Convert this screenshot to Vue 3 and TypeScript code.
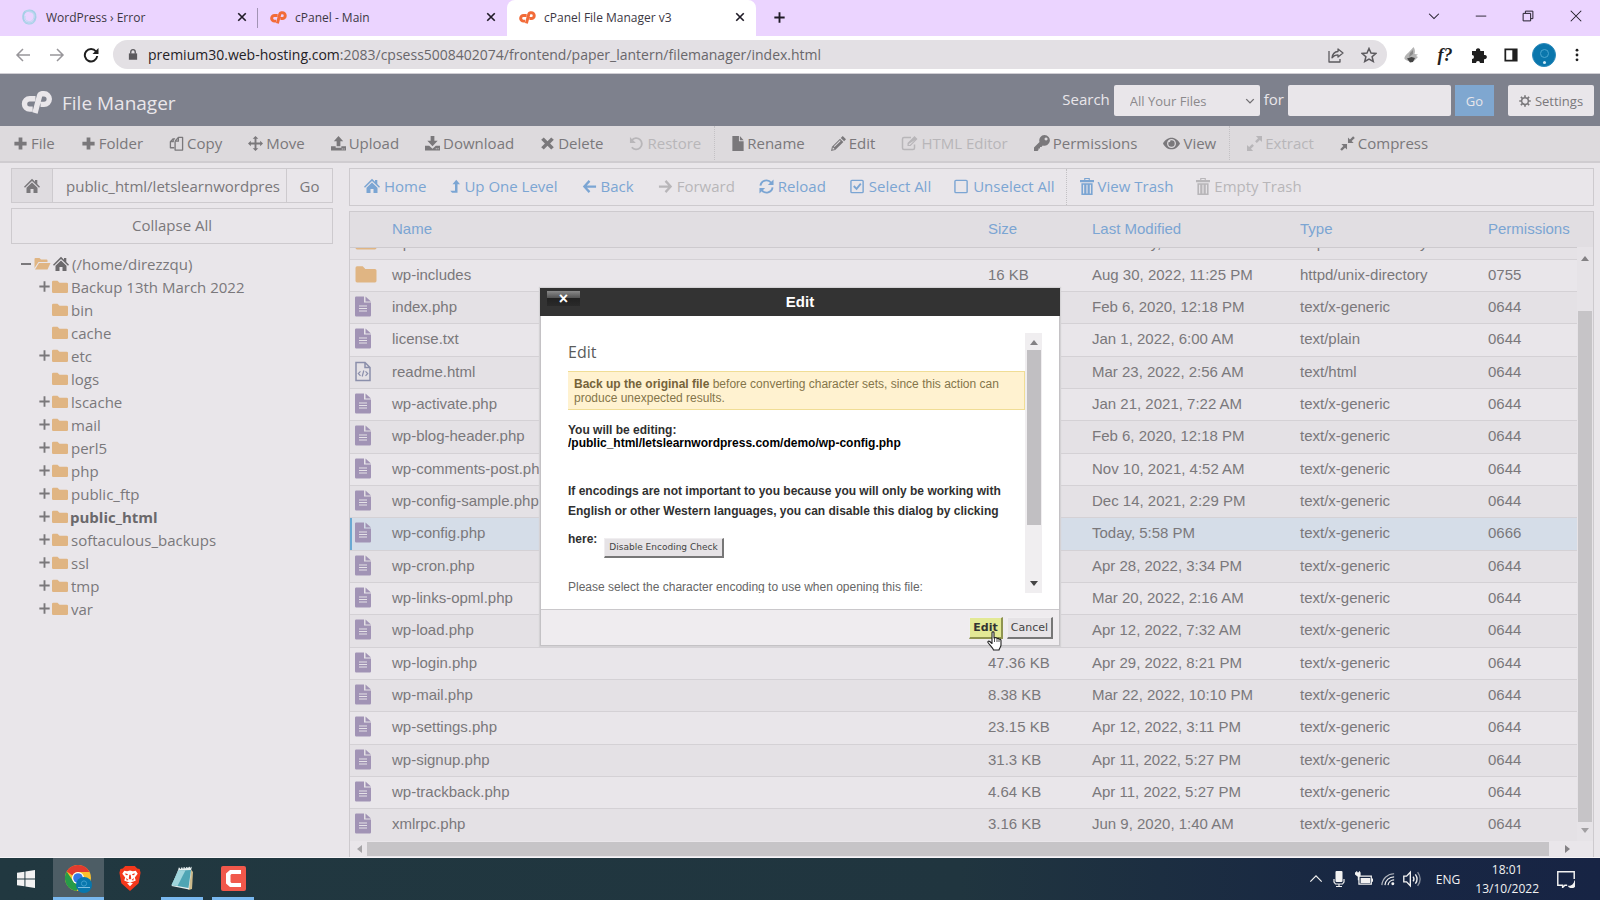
<script setup lang="ts">
import { h, ref } from 'vue'

const icons: Record<string, string> = {
  plus: '<path d="M6 1.500h4V6h4.500v4H10v4.500H6V10H1.500V6H6z"/>',
  copy: '<path fill="none" stroke="currentColor" stroke-width="1.400" stroke-linejoin="round" d="M5.500 12.500H1.500V6l3-3h2M4.500 3v3h-3M6.500 5.500l3.500-4h4.500v10.500M10 1.500v4H6.500M6.500 5.500v9.500h8v-4"/>',
  move: '<path d="M8 0l3 3H9v4h4V5l3 3-3 3V9H9v4h2l-3 3-3-3h2V9H3v2L0 8l3-3v2h4V3H5z"/>',
  upload: '<path d="M8 0l5 5.500h-3V11H6V5.500H3z"/><path d="M0 11h5v1.500h6V11h5v4.500H0zM11.500 13.300v1h1v-1zm2 0v1h1v-1z" fill-rule="evenodd"/>',
  download: '<path d="M6 0h4v5h3.500L8 10.800 2.500 5H6z"/><path d="M0 10.500h4.500L8 13.500l3.500-3H16v5H0zM11.500 13v1h1v-1zm2 0v1h1v-1z" fill-rule="evenodd"/>',
  times: '<path d="M4 1.500l4 4 4-4L14.800 4l-4 4 4 4-2.800 2.500-4-4-4 4L1.200 12l4-4-4-4z"/>',
  undo: '<path fill="none" stroke="currentColor" stroke-width="2" d="M3 4.500a6 6 0 1 1 0 7.500"/><path d="M1 1v6.500h6.300z"/>',
  file: '<path d="M2 0h7v5.500h5V16H2z"/><path d="M10 0l4 4.500h-4z"/>',
  pencil: '<path fill-rule="evenodd" d="M12.500 0L16 3.500 14 5.600 10.400 2zM9.600 2.800l3.600 3.600L4.500 15 0 16l1-4.600zM9.500 4.600L3 11l.7.700L10.300 5.300zM2 12l-.5 2.500L4 14z"/>',
  edit: '<path fill="none" stroke="currentColor" stroke-width="1.500" d="M9.500 2.500h-7a1.500 1.500 0 0 0-1.500 1.500v9a1.500 1.500 0 0 0 1.500 1.500h9a1.500 1.500 0 0 0 1.500-1.500V9.500"/><path fill-rule="evenodd" d="M13 1l3 3-7 7H6V8zM8 8.500L7.300 9v1h1L13.500 5z"/>',
  key: '<path fill-rule="evenodd" d="M10.500 0a5.400 5.400 0 1 1-1.800 10.500L7.500 12H6v1.500H4.500V15l-1 1H0v-3.500l5.500-5.500A5.400 5.400 0 0 1 10.500 0zM12 2.500a1.500 1.500 0 1 0 .1 0z"/>',
  eye: '<path fill-rule="evenodd" d="M8 2.500c3.500 0 6.500 2.300 8 5.500-1.500 3.200-4.500 5.500-8 5.500S1.500 11.200 0 8c1.500-3.200 4.500-5.500 8-5.500zM8 3.800A4.200 4.200 0 1 0 8 12.200 4.200 4.200 0 0 0 8 3.800zM8 5a3 3 0 1 1-3 3c0-.5.1-.9.300-1.300A1.500 1.500 0 0 0 7 5.200c.3-.1.600-.2 1-.2z"/>',
  expand: '<path d="M9.500 0H16v6.500l-2.300-2.300-3.200 3.200-1.900-1.900 3.200-3.200zM6.500 16H0V9.500l2.300 2.300 3.200-3.200 1.900 1.900-3.200 3.200z"/>',
  compress: '<path d="M8.500 7.500V1.500L10.600 3.600 14 .2 15.800 2l-3.400 3.400 2.100 2.100zM7.500 8.500v6l-2.100-2.100L2 15.800.2 14l3.400-3.400-2.100-2.100z"/>',
  home: '<path d="M8 .8l3 3V2h2.300v4L16 8.700l-1 1L8 3 1 9.700l-1-1z"/><path d="M8 4.500l5.500 5.200V15h-4v-4h-3v4h-4V9.700z"/>',
  levelup: '<path d="M9.500 0L14 5.300h-3V15.500H4.500L2.300 13h5.700V5.300H5z"/>',
  back: '<path fill="none" stroke="currentColor" stroke-width="2.400" d="M8 2L2.500 8 8 14M2.500 8H15"/>',
  forward: '<path fill="none" stroke="currentColor" stroke-width="2.400" d="M8 2l5.500 6L8 14M13.500 8H1"/>',
  reload: '<path fill="none" stroke="currentColor" stroke-width="2" d="M1.500 7A6.500 6.500 0 0 1 13 4M14.500 9A6.500 6.500 0 0 1 3 12"/><path d="M15.500 .5v6h-6zM.5 15.500v-6h6z"/>',
  check: '<rect x="1" y="1.500" width="13" height="13" rx="1" fill="none" stroke="currentColor" stroke-width="1.500"/><path fill="none" stroke="currentColor" stroke-width="2" d="M4 7.500l3 3L11.500 5"/>',
  square: '<rect x="1" y="1.500" width="13" height="13" rx="1" fill="none" stroke="currentColor" stroke-width="1.500"/>',
  trash: '<path fill-rule="evenodd" d="M4.500 0h6v2H15v2.500H0V2h4.500zm1.200 1v1h3.600V1zM1.500 5.500h12V18h-12zM3.300 7v9.500h1.200V7zm3.600 0v9.500h1.200V7zM10.500 7v9.500h1.200V7z"/>',
  cog: '<path fill="none" stroke="currentColor" stroke-width="2" d="M8 3.500a4.500 4.500 0 1 1 0 9 4.500 4.500 0 0 1 0-9z"/><path fill="none" stroke="currentColor" stroke-width="2.200" d="M8 .3v3M8 12.700v3M.3 8h3M12.700 8h3M2.500 2.500l2 2M11.500 11.500l2 2M13.500 2.500l-2 2M4.500 11.500l-2 2"/>',
  folder: '<path d="M0 3a1.200 1.200 0 0 1 1.200-1.200H5.500L7.500 3.800h7.300A1.200 1.200 0 0 1 16 5v7.800a1.200 1.200 0 0 1-1.200 1.200H1.200A1.200 1.200 0 0 1 0 12.800z"/>',
  folderopen: '<path d="M0 3a1 1 0 0 1 1-1h4l1.500 1.500H12a1 1 0 0 1 1 1V6H4L0 12z"/><path d="M4.500 7H16l-3 6.500H.5z"/>',
  plain: '<path d="M0 1.200A1.200 1.200 0 0 1 1.200 0H9v6h7v12.800A1.200 1.200 0 0 1 14.800 20H1.200A1.200 1.200 0 0 1 0 18.800z"/><path d="M10.500 0L16 5h-5.500z"/><path stroke="#e5e2e7" stroke-width="1" d="M4 9.500h8M4 12h8M4 14.500h8"/>',
  html: '<path fill="none" stroke="currentColor" stroke-width="1.500" d="M1 1h9l5 5v13H1zM10 1v5h5"/><path fill="none" stroke="currentColor" stroke-width="1.200" d="M5.500 9.800L3.300 12l2.200 2.300M10.500 9.800l2.200 2.200-2.200 2.300M8.800 9l-1.600 6"/>',
  cp: '<path fill="none" stroke="currentColor" stroke-width="5.400" d="M14 7.700H8.200a5 5 0 0 0 0 10.400h3"/><path fill="none" stroke="currentColor" stroke-width="5.400" stroke-linejoin="round" d="M13.500 22L18 5a3 3 0 0 1 2.600-2.200h1.900a5.300 5.300 0 0 1 0 10.600h-3.500"/>',
  close: '<path fill="none" stroke="currentColor" stroke-width="2.200" d="M3 3l10 10M13 3L3 13"/>',
  thinclose: '<path fill="none" stroke="currentColor" stroke-width="1.200" d="M2 2l12 12M14 2L2 14"/>',
  chevron: '<path fill="none" stroke="currentColor" stroke-width="1.400" d="M1.500 5L8 11.500 14.500 5"/>',
  caretdown: '<path fill="none" stroke="currentColor" stroke-width="2.200" d="M2 5l6 6 6-6"/>',
  minimize: '<path d="M1 7.500h14v1.200H1z"/>',
  restore: '<path fill="none" stroke="currentColor" stroke-width="1.300" d="M1.500 4.500h10v10h-10zM4.500 4V1.500h10v10H12"/>',
  arrowleft: '<path fill="none" stroke="currentColor" stroke-width="1.500" d="M8 2L2 8l6 6M2 8h13"/>',
  arrowright: '<path fill="none" stroke="currentColor" stroke-width="1.500" d="M8 2l6 6-6 6M14 8H1"/>',
  refresh: '<path fill="none" stroke="currentColor" stroke-width="2" d="M13 4.500A6.200 6.200 0 1 0 14.200 9"/><path d="M15.500 1v6h-6z"/>',
  lock: '<path d="M2.500 6.500h11V15h-11z"/><path fill="none" stroke="currentColor" stroke-width="1.800" d="M5 7V4.500a3 3 0 0 1 6 0V7"/>',
  share: '<path fill="none" stroke="currentColor" stroke-width="1.300" stroke-linejoin="round" d="M1 4v11h11v-3M10 2l5 4-5 4V7.800c-3 0-4.500 1-6 3 .5-4 2.500-6 6-6.300z"/>',
  star: '<path fill="none" stroke="currentColor" stroke-width="1.500" d="M8 1.500l2 4.600 4.800.4-3.700 3.200 1.200 4.800L8 12l-4.300 2.500 1.200-4.800L1.200 6.500 6 6.100z"/>',
  puzzle: '<path d="M1 4h4a2.200 2.200 0 1 1 4.200 0H13v4a2.200 2.200 0 1 1 0 4.200V16H9a2 2 0 1 0-4 0H1v-4a2 2 0 1 0 0-4z"/>',
  panel: '<path fill-rule="evenodd" d="M.5.500h15v15H.500zM2.500 2.500v11h7v-11z"/>',
  dots: '<circle cx="8" cy="2.500" r="1.600"/><circle cx="8" cy="8" r="1.600"/><circle cx="8" cy="13.500" r="1.600"/>',
  bird: '<path fill="#b4b4b4" d="M1.500 12C1 8 6 6 10.500 0c2 3 1.500 5 1 7l3.500.5-2 1.500 2 1-3.500 3.500c-4 1.500-7 1-10-1.500z"/><path fill="#444" d="M4 11.500l4.500-1.500 3.500 1-2 4-3 .5z"/><path fill="#8a8a8a" d="M7 6l3-3v4l-4 3z"/>',
  swirl: '<path fill="none" stroke="#a5cfe6" stroke-width="2" d="M8 1.500c4 0 6.500 3 6 7s-3.500 6.500-7 6S1.300 11 1.700 7 5 1.500 8 1.500z"/><path fill="none" stroke="#bcd9f0" stroke-width="1" d="M8 3c3 0 5 2 4.500 5S10 13 7 12.500 3 10 3.500 7M4 2.500c4-2 9 1 9.500 4M3 12c2 3 7 3 10 0"/>',
  windows: '<path d="M0 2.500l6.600-1v6H0zM7.500 1.400L16 0v7.500H7.500zM0 8.500h6.600v6L0 13.500zM7.500 8.500H16V16l-8.500-1.400z"/>',
  chrome: '<circle cx="13" cy="13" r="13" fill="#fbc02d"/><path fill="#e33b2e" d="M1.700 6.500A13 13 0 0 1 24.500 7H13a6 6 0 0 0-5.500 3.500z"/><path fill="#279b48" d="M1.700 6.500L8 16a6 6 0 0 0 7 2.700L11.500 26A13 13 0 0 1 1.700 6.500z"/><circle cx="13" cy="13" r="6" fill="#fff"/><circle cx="13" cy="13" r="4.800" fill="#3478e5"/><circle cx="19" cy="20" r="8" fill="#0877ad"/><circle cx="19" cy="18.500" r="2.600" fill="none" stroke="#3f9fce"/><path stroke="#7fc0e0" d="M13 22.500h12"/>',
  brave: '<path fill="#f4381c" d="M6 0h10l2.500 2.500L21 3l1 4-2 11-9 8-9-8L0 7l1-4 2.500-.5z"/><path fill="#fff" d="M5 5l3 .5 3-.8 3 .8 3-.5 2 3-3 4 1 3-3 1.500-3 .5-3-.500-3-1.500 1-3-3-4zM8 18l3-1 3 1-3 3z"/><path fill="#f4381c" d="M6 7.500l3 1-1 1.200-1.500-.4zM16 7.500l-3 1 1 1.200 1.500-.4zM10.300 9h1.400l.6 4-1.300 1-1.300-1zM7 12.500l2.500 2-2 .5zM15 12.500l-2.500 2 2 .5z"/>',
  notepad: '<path fill="#cdbb8c" d="M20 3l2.500 3-1 17-3.500 1z"/><path fill="#e8f0f0" d="M8 3l13-1.500L18.500 23.500 1 20z"/><path fill="#4fa5b4" d="M8 4.500l12.500-.5L18 22 1 19z"/><path fill="#9fd5dc" d="M8 4.500l7-.3L7 20l-6-1z"/><path stroke="#dfe8ea" stroke-width="1.500" stroke-dasharray="1.500 1" d="M8 2.500l13-1"/>',
  camtasia: '<rect width="25" height="25" rx="2" fill="#f1584b"/><path fill="#fff" d="M9 4h11v4h-9.500L9.500 9v7l1 1H20v4H9l-4-3.500v-10z"/>',
  mic: '<rect x="4.500" y="0" width="7" height="11" rx="1"/><path fill="none" stroke="currentColor" stroke-width="1.200" d="M3 8v3l1.500 2h7L13 11V8M8 13v2.500M5 15.500h6"/>',
  battery: '<path fill="none" stroke="currentColor" stroke-width="1.100" d="M3.500 5.500h11v7h-11z"/><path d="M5 7h8.500v4.500H5zM15 7.500h1.200v3H15zM0 2h1V1h1v1h1.500V1h1v1H5v3L3.500 6v3h-1V6L0 4z"/>',
  wifi: '<g fill="none" stroke="currentColor" stroke-width="1.300"><path d="M1 15A14 14 0 0 1 15 2" opacity=".7"/><path d="M4.500 15A10.500 10.500 0 0 1 15 5.500M8 15A7 7 0 0 1 15 9"/></g><circle cx="13.500" cy="13.500" r="1.700"/>',
  volume: '<path fill="none" stroke="currentColor" stroke-width="1.200" d="M.7 5.500h2.500L6.500 2v12L3.200 10.500H.7zM9 5.800q1.500 2.200 0 4.400"/><path fill="none" stroke="currentColor" stroke-width="1.200" d="M11 3.800q3 4.200 0 8.400"/><path opacity=".5" fill="none" stroke="currentColor" stroke-width="1.200" d="M13 1.800q4.500 6.200 0 12.400"/>',
  notice: '<path fill="none" stroke="currentColor" stroke-width="1.300" d="M9 13.500H7L5 15.500V13.500H.700V1.500h14.600V8"/><path d="M15.500 9a4 4 0 1 1-6 5c3 .5 5.500-1.500 6-5z"/>',
  hand: '<path fill="#fff" stroke="#222" stroke-width="1.100" stroke-linejoin="round" d="M5 1.500C5 .5 7 .5 7 1.500V7l1-.5 1.500.2.500.8 1.500-.2.500.8 1.500.2.500 1.200V14c0 2-1.500 3-2 5H6.500C6 17 3 14.500 1 11.500c-.5-1.200.8-1.800 1.800-1L5 12.500z"/><path stroke="#222" stroke-width=".8" d="M7.500 7v4M10 8v3M12 8.500V11"/>',
}

const sizes: Record<string, string> = {
  plain: '0 0 16 20', html: '0 0 16 20', cp: '0 0 31 23', chrome: '0 0 27 28', brave: '0 0 22 26',
  notepad: '0 0 24 25', camtasia: '0 0 25 25', hand: '0 0 15 20', levelup: '2 0 12 16', file: '2 0 12 16',
  times: '1 1 14 14', trash: '0 0 15 18',
}

const Icon = (p: { name: string }) =>
  h('svg', { viewBox: sizes[p.name] ?? '0 0 16 16', fill: 'currentColor', 'aria-hidden': 'true', innerHTML: icons[p.name] })

interface Tool { icon: string; label: string; off?: boolean; sep?: boolean }
const tools: Tool[] = [
  { icon: 'plus', label: 'File' }, { icon: 'plus', label: 'Folder' }, { icon: 'copy', label: 'Copy' },
  { icon: 'move', label: 'Move' }, { icon: 'upload', label: 'Upload' }, { icon: 'download', label: 'Download' },
  { icon: 'times', label: 'Delete' }, { icon: 'undo', label: 'Restore', off: true },
  { icon: 'file', label: 'Rename', sep: true }, { icon: 'pencil', label: 'Edit' },
  { icon: 'edit', label: 'HTML Editor', off: true }, { icon: 'key', label: 'Permissions' },
  { icon: 'eye', label: 'View' }, { icon: 'expand', label: 'Extract', off: true, sep: true },
  { icon: 'compress', label: 'Compress' },
]
const nav: Tool[] = [
  { icon: 'home', label: 'Home' }, { icon: 'levelup', label: 'Up One Level' }, { icon: 'back', label: 'Back' },
  { icon: 'forward', label: 'Forward', off: true }, { icon: 'reload', label: 'Reload' },
  { icon: 'check', label: 'Select All' }, { icon: 'square', label: 'Unselect All' },
  { icon: 'trash', label: 'View Trash', sep: true }, { icon: 'trash', label: 'Empty Trash', off: true },
]
const tree = [
  { name: 'Backup 13th March 2022', open: true }, { name: 'bin' }, { name: 'cache' }, { name: 'etc', open: true },
  { name: 'logs' }, { name: 'lscache', open: true }, { name: 'mail', open: true }, { name: 'perl5', open: true },
  { name: 'php', open: true }, { name: 'public_ftp', open: true }, { name: 'public_html', open: true, current: true },
  { name: 'softaculous_backups', open: true }, { name: 'ssl', open: true }, { name: 'tmp', open: true },
  { name: 'var', open: true },
] as { name: string; open?: boolean; current?: boolean }[]

const columns = ['Name', 'Size', 'Last Modified', 'Type', 'Permissions']
const g = 'text/x-generic'
const files: string[][] = [
  ['folder', 'wp-includes', '16 KB', 'Aug 30, 2022, 11:25 PM', 'httpd/unix-directory', '0755'],
  ['plain', 'index.php', '', 'Feb 6, 2020, 12:18 PM', g, '0644'],
  ['plain', 'license.txt', '', 'Jan 1, 2022, 6:00 AM', 'text/plain', '0644'],
  ['html', 'readme.html', '', 'Mar 23, 2022, 2:56 AM', 'text/html', '0644'],
  ['plain', 'wp-activate.php', '', 'Jan 21, 2021, 7:22 AM', g, '0644'],
  ['plain', 'wp-blog-header.php', '', 'Feb 6, 2020, 12:18 PM', g, '0644'],
  ['plain', 'wp-comments-post.php', '', 'Nov 10, 2021, 4:52 AM', g, '0644'],
  ['plain', 'wp-config-sample.php', '', 'Dec 14, 2021, 2:29 PM', g, '0644'],
  ['plain', 'wp-config.php', '', 'Today, 5:58 PM', g, '0666'],
  ['plain', 'wp-cron.php', '', 'Apr 28, 2022, 3:34 PM', g, '0644'],
  ['plain', 'wp-links-opml.php', '', 'Mar 20, 2022, 2:16 AM', g, '0644'],
  ['plain', 'wp-load.php', '', 'Apr 12, 2022, 7:32 AM', g, '0644'],
  ['plain', 'wp-login.php', '47.36 KB', 'Apr 29, 2022, 8:21 PM', g, '0644'],
  ['plain', 'wp-mail.php', '8.38 KB', 'Mar 22, 2022, 10:10 PM', g, '0644'],
  ['plain', 'wp-settings.php', '23.15 KB', 'Apr 12, 2022, 3:11 PM', g, '0644'],
  ['plain', 'wp-signup.php', '31.3 KB', 'Apr 11, 2022, 5:27 PM', g, '0644'],
  ['plain', 'wp-trackback.php', '4.64 KB', 'Apr 11, 2022, 5:27 PM', g, '0644'],
  ['plain', 'xmlrpc.php', '3.16 KB', 'Jun 9, 2020, 1:40 AM', g, '0644'],
]
const selected = ref('wp-config.php')
const path = ref('public_html/letslearnwordpress.com/demo')
const query = ref('')
const tabs = [
  { icon: 'swirl', title: 'WordPress › Error' },
  { icon: 'cp', title: 'cPanel - Main' },
  { icon: 'cp', title: 'cPanel File Manager v3', active: true },
]
</script>

<template>
  <div class="screen">
    <div class="tabstrip">
      <div v-for="t in tabs" :key="t.title" class="tab" :class="{ active: t.active }">
        <Icon :name="t.icon" class="favicon" :class="t.icon" />
        <span class="tab-title">{{ t.title }}</span>
        <button class="bare" aria-label="Close tab"><Icon name="close" class="i12" /></button>
      </div>
      <button class="bare newtab" aria-label="New tab"><Icon name="plus" class="thinplus" /></button>
      <div class="winbtns">
        <button class="bare" aria-label="Search tabs"><Icon name="chevron" class="i12" /></button>
        <button class="bare" aria-label="Minimize"><Icon name="minimize" class="i12" /></button>
        <button class="bare" aria-label="Restore"><Icon name="restore" class="i12" /></button>
        <button class="bare" aria-label="Close"><Icon name="thinclose" class="i14" /></button>
      </div>
    </div>

    <div class="addressbar">
      <button class="bare dim" aria-label="Back"><Icon name="arrowleft" class="i16" /></button>
      <button class="bare dim" aria-label="Forward"><Icon name="arrowright" class="i16" /></button>
      <button class="bare" aria-label="Reload"><Icon name="refresh" class="i16" /></button>
      <div class="omnibox">
        <Icon name="lock" class="lock" />
        <span class="url"><b>premium30.web-hosting.com</b>:2083/cpsess5008402074/frontend/paper_lantern/filemanager/index.html</span>
        <button class="bare" aria-label="Share"><Icon name="share" class="i16" /></button>
        <button class="bare" aria-label="Bookmark"><Icon name="star" class="i16" /></button>
      </div>
      <div class="extensions">
        <button class="bare" aria-label="Extension"><Icon name="bird" class="i16" /></button>
        <button class="bare fn">f?</button>
        <button class="bare" aria-label="Extensions"><Icon name="puzzle" class="i16" /></button>
        <button class="bare" aria-label="Side panel"><Icon name="panel" class="i14" /></button>
        <span class="avatar"><i></i></span>
        <button class="bare" aria-label="Menu"><Icon name="dots" class="i14" /></button>
      </div>
    </div>

    <header class="brandbar">
      <Icon name="cp" class="brand" />
      <h1>File Manager</h1>
      <form class="search" @submit.prevent>
        <label for="scope">Search</label>
        <span class="selectwrap">
          <select id="scope"><option>All Your Files</option></select>
          <Icon name="caretdown" class="caret" />
        </span>
        <label for="query">for</label>
        <input id="query" v-model="query" type="text" />
        <button class="go">Go</button>
        <button type="button" class="settings"><Icon name="cog" class="i12" />Settings</button>
      </form>
    </header>

    <div class="toolbar">
      <button v-for="t in tools" :key="t.label" class="tool" :class="{ sep: t.sep }" :disabled="t.off">
        <Icon :name="t.icon" class="ti" :class="'ti-' + t.icon" />{{ t.label }}
      </button>
    </div>

    <main class="main">
      <aside class="side">
        <div class="pathrow">
          <button class="homebtn" aria-label="Home folder"><Icon name="home" class="i16" /></button>
          <input v-model="path" type="text" aria-label="Path" />
          <button class="pathgo">Go</button>
        </div>
        <button class="collapse">Collapse All</button>
        <ul class="tree">
          <li class="root">
            <span class="minus"></span><Icon name="folderopen" class="tf" /><Icon name="home" class="th" />
            <a href="#">(/home/direzzqu)</a>
          </li>
          <li v-for="n in tree" :key="n.name" :class="{ current: n.current }">
            <span class="knob"><Icon v-if="n.open" name="plus" class="kn" /></span>
            <Icon name="folder" class="tf" /><a href="#">{{ n.name }}</a>
          </li>
        </ul>
      </aside>

      <section class="content">
        <div class="nav">
          <button v-for="t in nav" :key="t.label" class="tool" :class="{ sep: t.sep }" :disabled="t.off">
            <Icon :name="t.icon" class="ti" :class="'ti-' + t.icon" />{{ t.label }}
          </button>
        </div>
        <div class="listing">
          <table>
            <colgroup><col class="c0" /><col /><col class="c2" /><col class="c3" /><col class="c4" /><col class="c5" /></colgroup>
            <thead>
              <tr><th></th><th v-for="c in columns" :key="c" scope="col">{{ c }}</th></tr>
            </thead>
            <tbody class="cut">
              <tr>
                <td><div><Icon name="folder" class="ff" /></div></td>
                <td><div>wp-content</div></td><td></td><td><div>Yesterday, 6:11 PM</div></td>
                <td><div>httpd/unix-directory</div></td><td></td>
              </tr>
            </tbody>
            <tbody class="rows">
              <tr v-for="f in files" :key="f[1]" :class="{ selected: f[1] === selected }" @click="selected = f[1]">
                <td><Icon :name="f[0]" :class="f[0] === 'folder' ? 'ff' : 'doc ' + f[0]" /></td>
                <td>{{ f[1] }}</td><td>{{ f[2] }}</td><td>{{ f[3] }}</td><td>{{ f[4] }}</td><td>{{ f[5] }}</td>
              </tr>
            </tbody>
          </table>
          <div class="vbar"><i class="up"></i><span class="vthumb"></span><i class="down"></i></div>
          <div class="hbar"><i class="left"></i><span class="hthumb"></span><i class="right"></i></div>
        </div>
      </section>
    </main>

    <footer class="taskbar">
      <button class="bare app" aria-label="Start"><Icon name="windows" class="win" /></button>
      <button class="bare app current" aria-label="Chrome"><Icon name="chrome" class="chrome" /></button>
      <button class="bare app" aria-label="Brave"><Icon name="brave" class="brave" /></button>
      <button class="bare app running" aria-label="Notepad"><Icon name="notepad" class="notepad" /></button>
      <button class="bare app running" aria-label="Camtasia"><Icon name="camtasia" class="notepad" /></button>
      <div class="tray">
        <Icon name="chevron" class="i14 flip" />
        <Icon name="mic" class="i16" />
        <Icon name="battery" class="i18" />
        <Icon name="wifi" class="i14" />
        <Icon name="volume" class="i18" />
        <span class="lang">ENG</span>
        <span class="clock"><span>18:01</span><span>13/10/2022</span></span>
        <Icon name="notice" class="i18" />
      </div>
    </footer>

    <div class="dialog" role="dialog" aria-labelledby="dlg">
      <div class="dlg-title">
        <button class="dlg-x" aria-label="Close">×</button>
        <h2 id="dlg">Edit</h2>
      </div>
      <div class="dlg-body">
        <div class="dlg-scroll">
          <h3>Edit</h3>
          <p class="notice"><b>Back up the original file</b> before converting character sets, since this action can produce unexpected results.</p>
          <p class="editing">You will be editing:<br /><span>/public_html/letslearnwordpress.com/demo/wp-config.php</span></p>
          <p class="enc">If encodings are not important to you because you will only be working with English or other Western languages, you can disable this dialog by clicking</p>
          <div class="here"><b>here:</b><button class="yui">Disable Encoding Check</button></div>
          <p class="please">Please select the character encoding to use when opening this file:</p>
        </div>
        <div class="dbar"><i class="up"></i><span></span><i class="down"></i></div>
      </div>
      <div class="dlg-foot">
        <button class="yui primary">Edit</button>
        <button class="yui">Cancel</button>
      </div>
      <Icon name="hand" class="hand" />
    </div>
  </div>
</template>

<style>
html, body { background: #e9e6ea; overflow: hidden; }
</style>

<style scoped>
* { box-sizing: border-box; }
.screen { min-height: 100vh; display: flex; flex-direction: column; position: relative; font-family: "Open Sans", sans-serif; font-size: 15px; color: #7a787b; }
button, input, select { font: inherit; color: inherit; }
svg { flex: none; display: block; }
.bare { border: 0; background: none; padding: 0; display: flex; align-items: center; justify-content: center; }
.i12 { width: 12px; height: 12px; }
.i14 { width: 14px; height: 14px; }
.i16 { width: 16px; height: 16px; }
.i18 { width: 18px; height: 18px; }

.tabstrip { height: 36px; background: #ebd4ff; display: flex; padding-left: 9px; color: #1f1b26; }
.tab { width: 249px; display: flex; align-items: center; padding: 0 10px 2px 12px; gap: 8px; font-size: 12px; position: relative; color: #3c3844; }
.tab:first-child::after { content: ""; position: absolute; right: 0; top: 8px; width: 1px; height: 20px; background: #a294b4; }
.tab.active { background: #fff; border-radius: 8px 8px 0 0; }
.tab .bare { color: #1f1b26; }
.favicon { width: 17px; height: 16px; }
.favicon.cp { color: #f26b38; height: 13px; }
.tab-title { flex: 1; white-space: nowrap; }
.newtab { width: 46px; padding: 0 0 2px; }
.thinplus { width: 15px; height: 15px; stroke: #ebd4ff; stroke-width: 2; }
.winbtns { margin-left: auto; display: flex; padding: 0 17px 4px 0; gap: 35px; }

.addressbar { height: 38px; background: #fff; border-bottom: 1px solid #d0ced4; display: flex; align-items: center; padding: 0 16px 0 15px; gap: 18px; color: #1f1f1f; }
.addressbar .dim { color: #98969a; }
.omnibox { flex: 1; height: 29px; border-radius: 15px; background: #e3e0e4; display: flex; align-items: center; gap: 17px; padding: 0 10px 0 14px; margin-left: -4px; color: #5c5a5e; }
.lock { width: 12px; height: 13px; margin-right: -8px; }
.url { flex: 1; font-size: 14px; color: #69676b; white-space: nowrap; }
.url b { font-weight: 400; color: #242226; }
.extensions { display: flex; align-items: center; gap: 17px; margin-left: -2px; }
.fn { font: italic 700 18px/20px "Liberation Serif", serif; width: 18px; }
.avatar { width: 24px; height: 24px; border-radius: 50%; background: #0a76ac; display: flex; justify-content: center; padding-top: 5px; border: 1px solid #2d8bbb; margin: 0 -3px; }
.avatar i { width: 9px; height: 9px; border-radius: 50%; border: 1px solid #4aa5d0; box-shadow: 0 9px 0 -3px #cfe9f5; }

.brandbar { height: 52px; background: #7e818d; display: flex; align-items: center; padding: 1px 6px 0 21px; color: #e9e6ea; }
.brand { width: 32px; height: 23px; margin-top: 4px; }
h1 { font-size: 19px; line-height: 24px; font-weight: 400; margin: 4px 0 0 9px; }
.search { margin-left: auto; display: flex; align-items: center; gap: 4px; }
.search label { margin-bottom: 4px; }
.selectwrap { position: relative; display: block; }
select { appearance: none; width: 146px; height: 31px; border: 0; border-radius: 2px; background: #e9e6ea; padding: 0 16px; font-size: 13px; color: #8b898c; }
.caret { position: absolute; right: 5px; top: 11px; width: 10px; height: 10px; color: #706e72; }
.search input { width: 163px; height: 31px; border: 0; border-radius: 2px; background: #e9e6ea; padding: 0 8px; }
.go { width: 39px; height: 31px; border: 0; background: #7fa7d0; color: #e9e6ea; font-size: 13px; padding: 0; }
.settings { width: 86px; height: 31px; border: 0; border-radius: 2px; background: #e9e6ea; color: #7a787b; font-size: 13px; display: flex; align-items: center; justify-content: center; gap: 4px; margin-left: 10px; padding: 0; }

.toolbar { height: 37px; background: #dddadd; border-bottom: 2px solid #cfccd0; display: flex; padding-bottom: 1px; }
.tool { border: 0; background: none; padding: 0 13px; display: flex; align-items: center; gap: 3px; white-space: nowrap; }
.tool:disabled { color: #b8b6b9; }
.tool.sep { border-left: 1px dotted #c3c1c4; padding-left: 17px; }
.ti { width: 15px; height: 15px; }
.ti-times { width: 13px; height: 13px; margin: 0 1px; }
.ti-file { width: 12px; }
.ti-edit { width: 17px; height: 16px; }
.ti-key { width: 16px; height: 16px; }
.ti-eye { width: 17px; height: 17px; }
.ti-levelup { width: 10px; }
.ti-trash { width: 14px; height: 17px; }

.main { flex: 1; background: #e9e6ea; display: flex; gap: 16px; padding: 5px 6px 0 11px; border-bottom: 1px solid #f6f4f7; }
.side { width: 322px; }
.pathrow { display: flex; height: 35px; border: 1px solid #cdcace; }
.homebtn { width: 41px; border: 0; border-right: 1px solid #cdcace; background: #dfdce0; display: flex; align-items: center; justify-content: center; padding: 0; }
.pathrow input { flex: 1; min-width: 0; border: 0; background: none; padding: 0 6px 0 13px; }
.pathgo { width: 46px; border: 0; border-left: 1px solid #cdcace; background: none; padding: 0; }
.collapse { display: block; width: 100%; height: 36px; margin-top: 5px; padding: 0 0 2px; border: 1px solid #cdcace; background: none; }
.tree { list-style: none; margin: 8px 0 0; padding: 0 0 0 27px; }
.tree li { display: flex; align-items: center; height: 23px; white-space: nowrap; }
.tree a { color: inherit; text-decoration: none; margin-left: 3px; }
.tree .root { margin-left: -17px; }
.minus { width: 10px; height: 2px; background: #7a787b; margin-right: 3px; }
.knob { width: 14px; }
.kn { width: 15px; height: 15px; stroke: #e9e6ea; stroke-width: 2; margin-left: -1px; }
.tf { width: 16px; height: 16px; color: #e0b583; }
.root .tf { width: 17px; }
.th { width: 16px; height: 16px; margin-left: 2px; color: #6b696c; }
.tree .current a { font-weight: 700; color: #6a686b; margin-left: 2px; }

.content { flex: 1; min-width: 0; display: flex; flex-direction: column; }
.nav { height: 38px; border: 1px solid #cdcace; display: flex; color: #7ba5d3; padding-left: 2px; }
.nav .tool { padding: 0 12px 2px; gap: 4px; }
.nav .tool:nth-child(n + 6) { padding-right: 11px; }
.nav .tool.sep { padding-left: 13px; }
.nav .ti-home { width: 16px; height: 16px; }
.listing { flex: 1; margin-top: 5px; border: 1px solid #cdcace; border-bottom: 0; display: grid; grid-template-columns: 1fr 16px; grid-template-rows: 35px 1fr 16px; }
table { grid-area: 1 / 1 / 3 / 3; align-self: start; width: 100%; border-collapse: collapse; table-layout: fixed; font-family: "Liberation Sans", Arial, sans-serif; font-size: 15px; }
.c0 { width: 42px; }
.c2 { width: 104px; }
.c3 { width: 208px; }
.c4 { width: 188px; }
.c5 { width: 105px; }
th { height: 35px; padding: 0 0 2px; text-align: left; font-weight: 400; color: #7ba5d3; background: #e1dee2; border-bottom: 1px solid #cdcace; }
td { padding: 0; white-space: nowrap; }
.cut tr { background: #e5e2e6; }
.cut div { height: 11px; line-height: 32px; overflow: hidden; display: flex; align-items: flex-end; }
.cut div svg { margin-bottom: 7px; }
.rows tr { height: 32px; border-top: 1px solid #d4d1d5; }
.rows tr:nth-child(3n) { height: 33px; }
.rows td { padding-bottom: 2px; }
.rows tr:nth-child(even) { background: #e4e1e5; }
.rows tr.selected { background: #d5dde8; }
.rows tr.selected td:first-child { box-shadow: inset 2px 0 0 #6aa9d3; }
.ff { width: 22px; height: 21px; margin-left: 5px; color: #e0b583; }
.doc { width: 16px; height: 21px; margin-left: 5px; color: #a193b5; }
.doc.html { color: #8b8fab; }
i.up, i.down { width: 0; height: 0; border: 4px solid transparent; }
i.up { border-bottom: 5px solid #838184; border-top: 0; }
i.down { border-top: 5px solid #a19fa2; border-bottom: 0; }
i.left, i.right { width: 0; height: 0; border: 4px solid transparent; }
i.left { border-right: 5px solid #a5a3a6; border-left: 0; }
i.right { border-left: 5px solid #838184; border-right: 0; }
.vbar { grid-area: 2 / 2; background: #e6e3e7; display: flex; flex-direction: column; align-items: center; padding: 9px 0 8px; }
.vthumb { width: 14px; flex: 1; margin: 50px 0 6px; background: #c6c4c7; }
.hbar { grid-area: 3 / 1 / 4 / 3; display: flex; align-items: center; padding: 0 23px 1px 7px; }
.hthumb { flex: 1; height: 14px; background: #c6c4c7; margin: 0 16px 0 5px; }

.taskbar { height: 42px; display: flex; background: linear-gradient(90deg, #213840 0%, #20353f 60%, #182743 85%, #172444 100%); color: #f2f2f2; }
.app { width: 51px; padding-bottom: 1px; }
.app.current { background: #4d5d65; border-bottom: 3px solid #79b8ef; padding: 2px 0 0; margin-left: 2px; }
.app.running { width: 42px; margin-right: 9px; border-bottom: 3px solid #79b8ef; padding: 2px 0 0; }
.win { width: 18px; height: 18px; }
.chrome { width: 27px; height: 28px; }
.brave { width: 22px; height: 25px; }
.app:nth-child(3) { margin-right: 6px; }
.notepad { width: 25px; height: 25px; }
.tray { margin-left: auto; display: flex; align-items: center; gap: 8px; padding: 0 25px 0 0; }
.flip { transform: rotate(180deg); }
.lang { font-size: 12px; margin: 0 7px 0 7px; }
.clock { display: flex; flex-direction: column; align-items: center; font-size: 12px; line-height: 19px; margin-right: 10px; }

.dialog { position: absolute; top: 288px; left: calc(50% - 260px); width: 520px; font-family: "Liberation Sans", Arial, sans-serif; font-size: 12px; background: #fff; border: 1px solid #c4c2c5; border-top: 0; box-shadow: 0 0 1px 1px #d4d2d5; }
.dlg-title { height: 28px; background: #333; display: flex; align-items: center; margin: 0 -1px; padding-bottom: 2px; position: relative; }
h2 { flex: 1; margin: 0; text-align: center; font-size: 15px; color: #fff; }
.dlg-x { position: absolute; left: 7px; top: 3px; width: 33px; height: 15px; border: 0; padding: 0; background: linear-gradient(#8a8a8a, #555 45%, #222 50%, #2a2a2a); color: #fff; font: 700 16px/14px "Liberation Sans", Arial, sans-serif; }
.dlg-body { display: flex; height: 260px; margin: 17px 17px 16px 26px; }
.dlg-scroll { flex: 1; overflow: hidden; color: #303030; margin-left: 1px; }
h3 { font: 400 16px/22px "Open Sans", sans-serif; margin: 8px 0; color: #5b5b5b; }
.notice { margin: 0 0 0 -1px; border: 1px solid #f0dd95; background: #fff2d0; color: #84754a; padding: 5px 6px 5px; line-height: 14px; height: 39px; }
.notice b { color: #75633a; }
.editing { margin: 14px 0 0; font-weight: 700; line-height: 13px; }
.editing span { color: #000; }
.enc { margin: 31px 0 0; font-weight: 700; line-height: 20px; }
.here { display: flex; align-items: center; height: 36px; gap: 7px; }
.here .yui { margin-top: 18px; }
.please { margin: 22px 0 0; color: #666; line-height: 16px; }
.yui { font: 11px/13px "DejaVu Sans", sans-serif; color: #444; background: #e6e3e6; border: 1px solid #f0eef0; border-right: 2px solid #777; border-bottom: 2px solid #777; padding: 2px 4px; white-space: nowrap; }
.here .yui { font-size: 9px; }
.dbar { width: 17px; background: #f0eef0; display: flex; flex-direction: column; align-items: center; padding: 7px 0; }
.dbar span { width: 14px; height: 175px; background: #c1bfc2; margin-top: 5px; }
.dbar i.down { margin-top: auto; border-top-color: #444; }
.dlg-foot { height: 36px; background: #efecef; border-top: 1px solid #cac8cb; display: flex; justify-content: flex-end; align-items: center; gap: 4px; padding: 0 6px; }
.primary { background: #e3e995; border-right-color: #8f9450; border-bottom-color: #8f9450; font-weight: 700; color: #333; }
.dlg-foot .yui { padding: 3px 3px; }
.hand { position: absolute; left: 446px; top: 343px; width: 15px; height: 20px; }
</style>
